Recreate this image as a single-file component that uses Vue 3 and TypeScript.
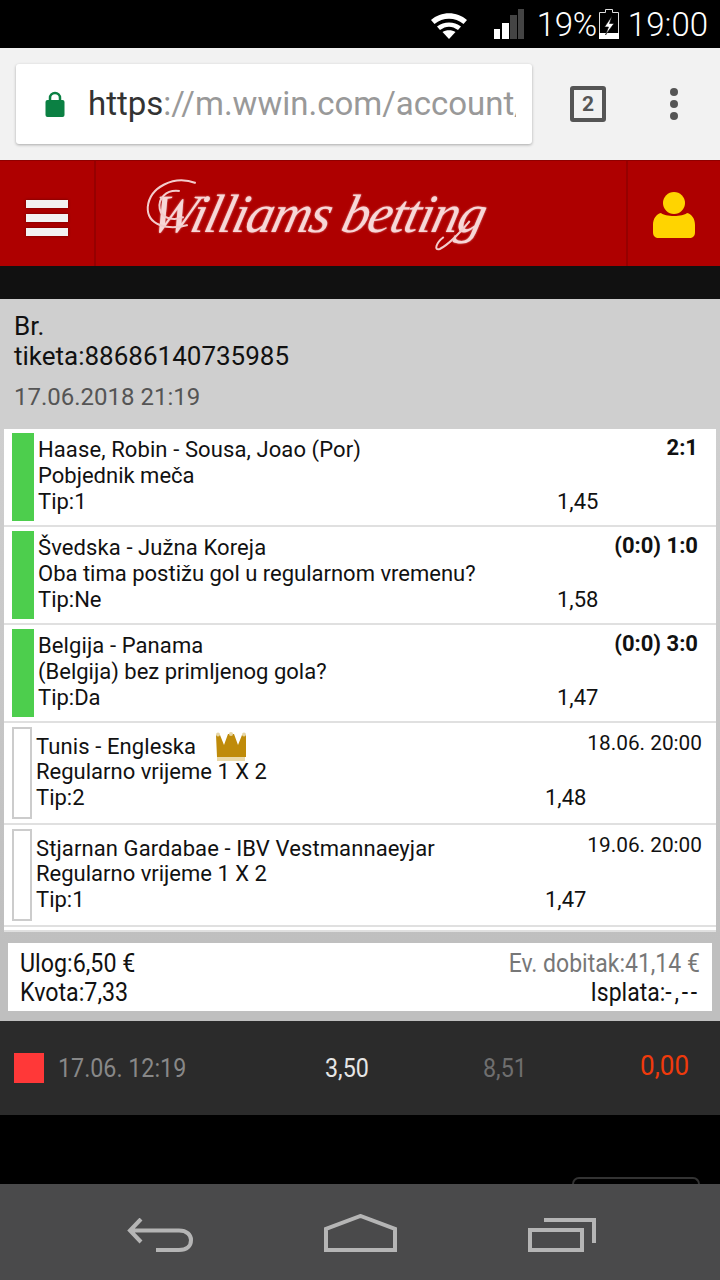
<template>
  <div class="screen">
    <div class="status-bar">
      <svg class="wifi" width="38" height="28" viewBox="0 0 38 28">
        <path d="M1 9 C11 0 27 0 37 9 L33.500 13 C25 6 13 6 4.500 13 Z" fill="#fff" />
        <path d="M7 15.500 C14 10 24 10 31 15.500 L28 19 C22 14.500 16 14.500 10 19 Z" fill="#fff" />
        <path d="M12.500 21 C16 18.500 22 18.500 25.500 21 L19 28 Z" fill="#fff" />
      </svg>
      <svg class="signal" width="30" height="30" viewBox="0 0 30 30">
        <rect x="0" y="20" width="6" height="10" fill="#fff" />
        <rect x="8" y="14" width="7" height="16" fill="#fff" />
        <rect x="16" y="6" width="7" height="24" fill="#444" />
        <rect x="24" y="0" width="6" height="30" fill="#444" />
      </svg>
      <span class="pct">19%</span>
      <svg class="battery" width="20" height="30" viewBox="0 0 20 30">
        <path d="M6.500 .5 H13.500 V3.500 H19.500 V29.500 H.5 V3.500 H6.500 Z" fill="#000" stroke="#ddd" />
        <rect x="0" y="24" width="20" height="6" fill="#fff" />
        <path d="M13 7 L5.500 18 H9.500 L6.500 26 L15 14.500 H10.500 Z" fill="#fff" stroke="#000" stroke-width=".6" />
      </svg>
      <span class="clock">19:00</span>
    </div>

    <div class="toolbar">
      <div class="omnibox">
        <svg class="lock" width="20" height="26" viewBox="0 0 20 26">
          <path d="M5 11 V7 A5 5 0 0 1 15 7 V11" fill="none" stroke="#0b8043" stroke-width="2.500" />
          <rect x="0.500" y="9" width="19" height="17" rx="2" fill="#0b8043" />
        </svg>
        <div class="url"><span class="url-dark">https</span>://m.wwin.com/account/</div>
      </div>
      <div class="tabs">2</div>
      <div class="dots"><i></i><i></i><i></i></div>
    </div>

    <header class="site-header">
      <div class="menu-cell">
        <div class="burger"><i></i><i></i><i></i></div>
      </div>
      <div class="logo-cell">
        <span class="logo">
          Williams betting
          <svg class="swash" width="340" height="80" viewBox="0 0 340 80">
            <path d="M52 8 C30 0 6 12 4 32 C3 50 24 56 44 50 M36 16 C22 14 14 24 16 34 C18 44 30 46 40 42" fill="none" stroke="#f3cccc" stroke-width="2" />
            <path d="M326 46 C316 58 304 70 296 74 C290 76 292 68 300 62" fill="none" stroke="#f3cccc" stroke-width="2" />
          </svg>
        </span>
      </div>
      <div class="user-cell">
        <svg width="42" height="46" viewBox="0 0 42 46">
          <circle cx="21" cy="11" r="11" fill="#ffd400" />
          <path d="M8 21 C12 25 30 25 34 21 C39 22 42 27 42 33 V40 C42 44 40 46 36 46 H6 C2 46 0 44 0 40 V33 C0 27 3 22 8 21 Z" fill="#ffd400" />
        </svg>
      </div>
    </header>
    <div class="black-band"></div>

    <div class="ticket-head">
      <div class="ticket-no">Br.<br />tiketa:88686140735985</div>
      <div class="ticket-date">17.06.2018 21:19</div>
    </div>

    <div class="rows">
      <div v-for="row in rows" :key="row.title" class="row" :class="{ open: !row.won }">
        <div class="marker" :class="row.won ? 'won' : 'pending'"></div>
        <div class="row-body">
          <div class="line">
            <span class="title">{{ row.title }}
              <svg v-if="row.crown" class="crown" width="30" height="30" viewBox="0 0 30 30">
                <path d="M0 3 H4 L8 13 L12 2 H18 L22 13 L26 3 H30 V25 H1 Z" fill="#bf8b0a" />
                <circle cx="2" cy="2.500" r="2" fill="#e6d6a6" />
                <circle cx="15" cy="2" r="2" fill="#e6d6a6" />
                <circle cx="28" cy="2.500" r="2" fill="#e6d6a6" />
                <rect x="1" y="25" width="28" height="4" fill="#ead9a8" />
              </svg>
            </span>
            <span class="result" :class="{ bold: row.won }">{{ row.result }}</span>
          </div>
          <div class="line">{{ row.market }}</div>
          <div class="line tip-line">
            <span class="tip">{{ row.tip }}</span>
            <span class="odd">{{ row.odd }}</span>
          </div>
        </div>
      </div>
      <div class="row-end"></div>
    </div>

    <div class="summary-wrap">
      <div class="summary">
        <div class="sum-line"><span class="sum-l">Ulog:6,50 €</span><span class="sum-r muted">Ev. dobitak:41,14 €</span></div>
        <div class="sum-line"><span class="sum-l">Kvota:7,33</span><span class="sum-r">Isplata:<span class="dashes">-,--</span></span></div>
      </div>
    </div>

    <div class="history">
      <div class="red-box"></div>
      <span class="h-date">17.06. 12:19</span>
      <span class="h-stake">3,50</span>
      <span class="h-odd">8,51</span>
      <span class="h-win">0,00</span>
    </div>

    <div class="gap"><div class="peek"></div></div>

    <nav class="nav-bar">
      <svg width="66" height="34" viewBox="0 0 66 34">
        <path d="M14 1 L3 12.500 L14 24 M3 12.500 H52 C60 12.500 64 17 64 22 C64 28 60 32 52 32 H29" fill="none" stroke="#b5b5b5" stroke-width="4" />
      </svg>
      <svg width="73" height="38" viewBox="0 0 73 38">
        <path d="M2 36 V15 L36.500 2 L71 15 V36 Z" fill="none" stroke="#b5b5b5" stroke-width="4" />
      </svg>
      <svg width="68" height="34" viewBox="0 0 68 34">
        <path d="M2 12 H54 V32 H2 Z" fill="none" stroke="#b5b5b5" stroke-width="4" />
        <path d="M16 2 H66 V25" fill="none" stroke="#b5b5b5" stroke-width="4" />
      </svg>
    </nav>
  </div>
</template>

<script setup lang="ts">
interface Row {
  title: string
  market: string
  tip: string
  odd: string
  result: string
  won: boolean
  crown?: boolean
}

const rows: Row[] = [
  { title: 'Haase, Robin - Sousa, Joao (Por)', market: 'Pobjednik meča', tip: 'Tip:1', odd: '1,45', result: '2:1', won: true },
  { title: 'Švedska - Južna Koreja', market: 'Oba tima postižu gol u regularnom vremenu?', tip: 'Tip:Ne', odd: '1,58', result: '(0:0) 1:0', won: true },
  { title: 'Belgija - Panama', market: '(Belgija) bez primljenog gola?', tip: 'Tip:Da', odd: '1,47', result: '(0:0) 3:0', won: true },
  { title: 'Tunis - Engleska', market: 'Regularno vrijeme 1 X 2', tip: 'Tip:2', odd: '1,48', result: '18.06. 20:00', won: false, crown: true },
  { title: 'Stjarnan Gardabae - IBV Vestmannaeyjar', market: 'Regularno vrijeme 1 X 2', tip: 'Tip:1', odd: '1,47', result: '19.06. 20:00', won: false },
]
</script>

<style>
html,
body {
  background: #000;
}
</style>

<style scoped>
.screen {
  width: 720px;
  height: 1280px;
  overflow: hidden;
  display: flex;
  flex-direction: column;
  font-family: Roboto, "Liberation Sans", sans-serif;
  background: #000;
}

.status-bar {
  height: 48px;
  flex: none;
  background: #000;
  color: #fff;
  display: flex;
  align-items: center;
  justify-content: flex-end;
  padding-right: 12px;
  font-size: 33px;
  font-weight: 300;
}

.wifi {
  margin-top: 2px;
  margin-right: 26px;
}

.signal {
  margin-right: 13px;
}

.pct {
  margin-right: 2px;
  letter-spacing: -0.3px;
}

.battery {
  margin-right: 9px;
}

.toolbar {
  height: 112px;
  flex: none;
  background: #f2f2f2;
  display: flex;
  align-items: center;
  padding-left: 16px;
  box-sizing: border-box;
}

.omnibox {
  width: 516px;
  height: 80px;
  background: #fff;
  border-radius: 3px;
  box-shadow: 0 1px 3px rgba(0, 0, 0, 0.3);
  display: flex;
  align-items: center;
  padding: 0 16px 0 29px;
  box-sizing: border-box;
  margin-top: -1px;
}

.lock {
  flex: none;
  margin-right: 23px;
}

.url {
  font-size: 33px;
  line-height: 60px;
  color: #999;
  white-space: nowrap;
  overflow: hidden;
  flex: 1;
}

.url-dark {
  color: #333;
}

.tabs {
  width: 36px;
  height: 36px;
  box-sizing: border-box;
  border: 4px solid #555;
  border-radius: 3px;
  margin-left: 38px;
  display: flex;
  align-items: center;
  justify-content: center;
  font-size: 21px;
  font-weight: 700;
  color: #555;
  margin-top: -1px;
}

.dots {
  display: flex;
  flex-direction: column;
  gap: 4px;
  margin-left: 64px;
  margin-top: -1px;
}

.dots i {
  width: 8px;
  height: 8px;
  border-radius: 50%;
  background: #555;
}

.site-header {
  height: 106px;
  flex: none;
  background: #ae0000;
  display: flex;
  border-top: 1px solid #8f0000;
  box-sizing: border-box;
}

.menu-cell {
  width: 94px;
  border-right: 2px solid #960000;
  display: flex;
  align-items: center;
  justify-content: center;
  flex: none;
}

.burger {
  display: flex;
  flex-direction: column;
  gap: 6px;
  margin-top: 9px;
}

.burger i {
  width: 42px;
  height: 8px;
  background: #f2f2f2;
  box-shadow: 0 0 3px #600;
}

.logo-cell {
  flex: 1;
  display: flex;
  align-items: center;
  justify-content: center;
  padding-right: 84px;
}

.logo {
  position: relative;
  font-family: "Liberation Serif", serif;
  font-style: italic;
  font-size: 54px;
  letter-spacing: -1.200px;
  color: #f7d7d7;
  text-shadow: 0 0 2px #e8a0a0;
  transform: skewX(-14deg);
  white-space: nowrap;
}

.swash {
  position: absolute;
  left: -8px;
  top: -8px;
  transform: skewX(14deg);
}

.user-cell {
  width: 94px;
  flex: none;
  border-left: 2px solid #960000;
  display: flex;
  align-items: center;
  justify-content: center;
  padding-top: 2px;
  box-sizing: border-box;
}

.black-band {
  height: 33px;
  flex: none;
  background: #111;
}

.ticket-head {
  height: 130px;
  flex: none;
  background: #cfcfcf;
  padding: 12px 14px 0;
  box-sizing: border-box;
}

.ticket-no {
  font-size: 26px;
  line-height: 30px;
  color: #111;
}

.ticket-date {
  font-size: 24px;
  line-height: 30px;
  color: #555;
  margin-top: 11px;
}

.rows {
  padding: 0 4px 11px;
  flex: none;
  display: flex;
  flex-direction: column;
  background: linear-gradient(#cfcfcf, #bfbfbf);
}

.row {
  height: 96px;
  background: #fff;
  display: flex;
  align-items: center;
  padding: 0 14px 0 8px;
  border-bottom: 2px solid #e0e0e0;
}

.row.open {
  height: 100px;
}

.marker {
  width: 22px;
  flex: none;
  margin-right: 4px;
  box-sizing: border-box;
}

.marker.won {
  height: 88px;
  background: #4dce4d;
}

.marker.pending {
  width: 20px;
  height: 92px;
  border: 2px solid #ccc;
}

.row-body {
  flex: 1;
  font-size: 22px;
  line-height: 26px;
  color: #111;
  padding-bottom: 2px;
}

.open .row-body {
  line-height: 25.500px;
  padding-bottom: 2px;
}

.line {
  display: flex;
  justify-content: space-between;
  white-space: nowrap;
}

.title {
  position: relative;
  letter-spacing: 0.1px;
}

.crown {
  position: absolute;
  left: 180px;
  top: -2px;
}

.result {
  font-size: 20.800px;
  margin-top: -3px;
}

.result.bold {
  font-size: 22px;
  font-weight: 700;
  margin-top: -2px;
  margin-right: 4px;
}

.tip-line {
  justify-content: flex-start;
}

.tip {
  width: 519px;
}

.open .tip {
  width: 509px;
}

.row-end {
  height: 3px;
  background: #fff;
  border-bottom: 2px solid #e0e0e0;
}

.summary-wrap {
  flex: none;
  background: #bfbfbf;
  padding: 0 8px 10px;
}

.summary {
  height: 68px;
  background: #fff;
  padding: 6px 12px 0;
  box-sizing: border-box;
  font-size: 25px;
  line-height: 29px;
  color: #111;
}

.sum-line {
  display: flex;
  justify-content: space-between;
}

/* texts on the device are narrower than Roboto at this height */
.sum-l {
  transform: scaleX(0.93);
  transform-origin: left center;
}

.sum-r {
  transform: scaleX(0.92);
  transform-origin: right center;
}

.dashes {
  letter-spacing: 3px;
}

.muted {
  color: #777;
}

.history {
  height: 94px;
  flex: none;
  background: #2b2b2b;
  display: flex;
  align-items: center;
  font-size: 25px;
  padding-left: 14px;
}

.history span {
  transform: scaleX(0.93);
  transform-origin: left center;
}

.red-box {
  width: 30px;
  height: 30px;
  background: #ff3838;
  margin-right: 14px;
}

.h-date {
  color: #888;
  width: 267px;
}

.h-stake {
  color: #e6e6e6;
  width: 158px;
}

.h-odd {
  color: #6f6f6f;
  width: 157px;
}

.h-win {
  color: #f03a0c;
  font-size: 28px;
  margin-top: -6px;
}

.gap {
  flex: 1;
  background: #000;
  display: flex;
  align-items: flex-end;
  justify-content: flex-end;
  padding-right: 20px;
}

.peek {
  width: 124px;
  height: 5px;
  border: 2px solid #333;
  border-bottom: none;
  border-radius: 8px 8px 0 0;
}

.nav-bar {
  height: 96px;
  flex: none;
  background: #4a4a4b;
  display: flex;
  align-items: flex-end;
  padding: 0 0 28px 127px;
  box-sizing: border-box;
  gap: 131px;
}
</style>
